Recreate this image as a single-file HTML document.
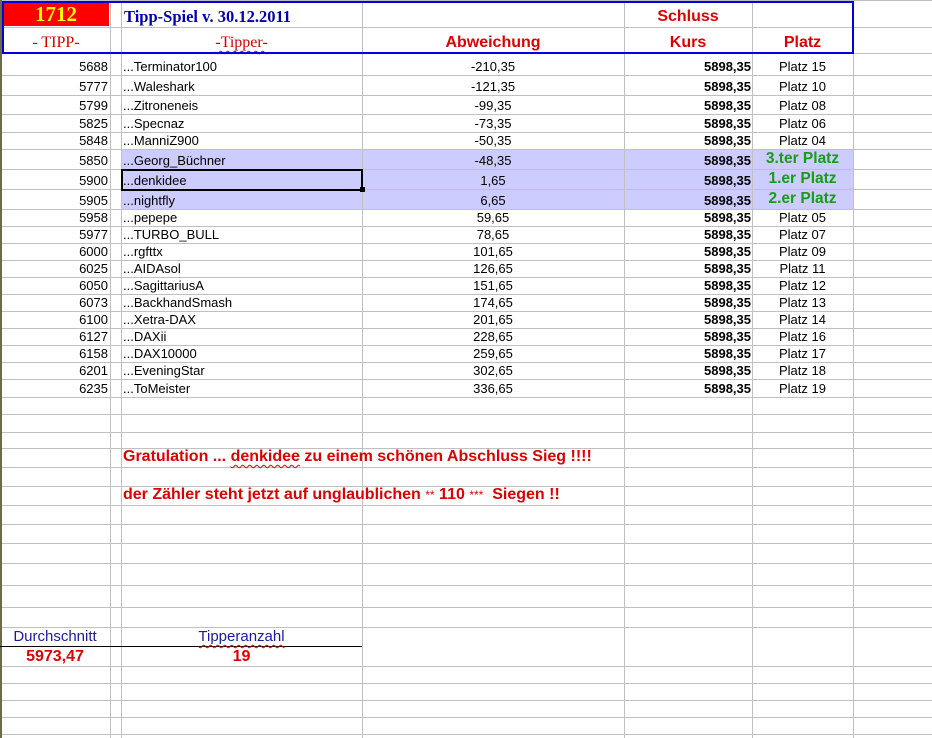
<!DOCTYPE html>
<html><head><meta charset="utf-8"><style>
body{margin:0;width:932px;height:738px;overflow:hidden;background:#fff;position:relative;font-family:"Liberation Sans",Arial,sans-serif;}
.h{position:absolute;left:0;width:932px;height:1px;background:#c0c0c0}
.v{position:absolute;top:0;height:738px;width:1px;background:#c0c0c0}
.t{position:absolute;font-size:13px;line-height:15px;color:#000;white-space:nowrap}
.r{text-align:right}
.c{text-align:center}
.b{font-weight:bold}
.red{color:#e00000}
.grn{color:#1a9a1a;font-weight:bold;font-size:15.5px}
.tm{font-family:"Liberation Serif","Times New Roman",serif}
.wavy{text-decoration:underline wavy #e00000;text-underline-offset:3px;text-decoration-thickness:1px}
</style></head><body>
<div style="position:absolute;left:121px;top:149px;width:732px;height:60px;background:#ccccff"></div>
<div id="grid"></div>
<script>
var ys=[0,27,53,75,95,114,132,149,169,189,209,226,243,260,277,294,311,328,345,362,379,397,414,432,448,467,486,505,524,543,563,585,607,627,666,683,700,717,734];
var xs=[110,121,362,624,752,853];
var g=document.getElementById('grid'),s='';
ys.forEach(function(y){s+='<div class="h" style="top:'+y+'px"></div>';});
xs.forEach(function(x){s+='<div class="v" style="left:'+x+'px"></div>';});
g.innerHTML=s;
</script>
<div style="position:absolute;left:0;top:0;width:2px;height:738px;background:#6b6b4a"></div>
<div style="position:absolute;left:0;top:646px;width:362px;height:1px;background:#000"></div>
<!-- header -->
<div style="position:absolute;left:3px;top:3px;width:106px;height:23px;background:#ff0000"></div>
<div class="t tm b c" style="left:3px;top:3px;width:106px;font-size:21px;line-height:22px;color:#ffff00">1712</div>
<div class="t tm b" style="left:124px;top:8px;font-size:16.5px;line-height:18px;color:#0000b0">Tipp-Spiel v. 30.12.2011</div>
<div class="t tm c" style="left:2px;top:34px;width:108px;font-size:16px;line-height:18px;color:#d00000">- TIPP-</div>
<div class="t tm c" style="left:121px;top:34px;width:241px;font-size:16px;line-height:18px;color:#d00000"><span class="wavy">-Tipper-</span></div>
<div class="t b c red" style="left:362px;top:34px;width:262px;font-size:16px;line-height:18px">Abweichung</div>
<div class="t b c red" style="left:624px;top:8px;width:128px;font-size:16px;line-height:18px">Schluss</div>
<div class="t b c red" style="left:624px;top:34px;width:128px;font-size:16px;line-height:18px">Kurs</div>
<div class="t b c red" style="left:752px;top:34px;width:101px;font-size:16px;line-height:18px">Platz</div>
<div style="position:absolute;left:2px;top:1px;width:848px;height:49px;border:2px solid #0000dd"></div>
<div id="rows"></div>
<script>
var d=[["5688","Terminator100","-210,35","Platz 15"],["5777","Waleshark","-121,35","Platz 10"],["5799","Zitroneneis","-99,35","Platz 08"],["5825","Specnaz","-73,35","Platz 06"],["5848","ManniZ900","-50,35","Platz 04"],["5850","Georg_Büchner","-48,35","3.ter Platz"],["5900","denkidee","1,65","1.er Platz"],["5905","nightfly","6,65","2.er Platz"],["5958","pepepe","59,65","Platz 05"],["5977","TURBO_BULL","78,65","Platz 07"],["6000","rgfttx","101,65","Platz 09"],["6025","AIDAsol","126,65","Platz 11"],["6050","SagittariusA","151,65","Platz 12"],["6073","BackhandSmash","174,65","Platz 13"],["6100","Xetra-DAX","201,65","Platz 14"],["6127","DAXii","228,65","Platz 16"],["6158","DAX10000","259,65","Platz 17"],["6201","EveningStar","302,65","Platz 18"],["6235","ToMeister","336,65","Platz 19"]];
var s2='';
d.forEach(function(r,i){var bot=ys[i+3],ty=bot-16;
s2+='<div class="t r" style="left:2px;top:'+ty+'px;width:106px">'+r[0]+'</div>';
s2+='<div class="t" style="left:123px;top:'+ty+'px">...'+r[1]+'</div>';
s2+='<div class="t c" style="left:362px;top:'+ty+'px;width:262px">'+r[2]+'</div>';
s2+='<div class="t r b" style="left:624px;top:'+ty+'px;width:127px">5898,35</div>';
if(i>=5&&i<=7)s2+='<div class="t c grn" style="left:752px;top:'+(ty-3)+'px;width:101px;line-height:17px">'+r[3]+'</div>';
else s2+='<div class="t c" style="left:752px;top:'+ty+'px;width:101px">'+r[3]+'</div>';});
document.getElementById('rows').innerHTML=s2;
</script>
<div style="position:absolute;left:121px;top:169px;width:238px;height:18px;border:2px solid #000"></div>
<div style="position:absolute;left:360px;top:187px;width:5px;height:5px;background:#000"></div>
<div class="t b red" style="left:123px;top:448px;font-size:16px;line-height:18px">Gratulation ... <span class="wavy">denkidee</span> zu einem schönen Abschluss Sieg !!!!</div>
<div class="t b red" style="left:123px;top:486px;font-size:16px;line-height:18px">der Zähler steht jetzt auf unglaublichen <span style="font-weight:normal;font-size:12px">**</span> 110 <span style="font-weight:normal;font-size:12px">***</span>&nbsp; Siegen !!</div>
<div class="t c" style="left:0;top:628px;width:110px;font-size:15px;line-height:17px;color:#1a1aa0">Durchschnitt</div>
<div class="t c" style="left:121px;top:628px;width:241px;font-size:15px;line-height:17px;color:#1a1aa0"><span class="wavy">Tipperanzahl</span></div>
<div class="t c b red" style="left:0;top:648px;width:110px;font-size:16px;line-height:18px">5973,47</div>
<div class="t c b red" style="left:121px;top:648px;width:241px;font-size:16px;line-height:18px">19</div>
</body></html>
